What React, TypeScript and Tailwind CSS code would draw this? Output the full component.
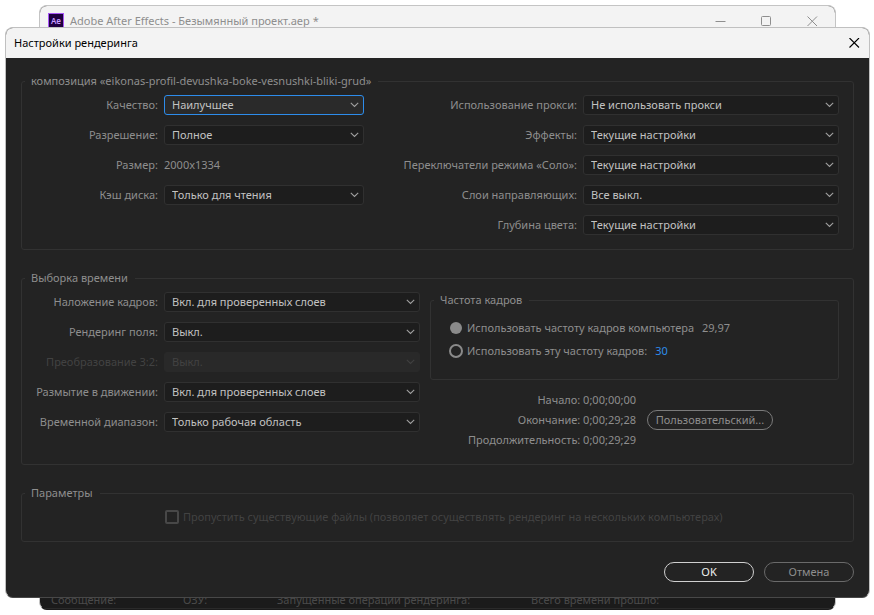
import { useId, useState } from 'react';
import type { ReactNode } from 'react';
import clsx from 'clsx';

const leftOptions = [
  { label: 'Качество:', value: 'Наилучшее', focused: true },
  { label: 'Разрешение:', value: 'Полное' },
  { label: 'Размер:', value: '2000x1334', text: true },
  { label: 'Кэш диска:', value: 'Только для чтения' },
];

const rightOptions = [
  { label: 'Использование прокси:', value: 'Не использовать прокси' },
  { label: 'Эффекты:', value: 'Текущие настройки' },
  { label: 'Переключатели режима «Соло»:', value: 'Текущие настройки' },
  { label: 'Слои направляющих:', value: 'Все выкл.' },
  { label: 'Глубина цвета:', value: 'Текущие настройки' },
];

const timeOptions = [
  { label: 'Наложение кадров:', value: 'Вкл. для проверенных слоев' },
  { label: 'Рендеринг поля:', value: 'Выкл.' },
  { label: 'Преобразование 3:2:', value: 'Выкл.', disabled: true },
  { label: 'Размытие в движении:', value: 'Вкл. для проверенных слоев' },
  { label: 'Временной диапазон:', value: 'Только рабочая область' },
];

type Option = {
  label: string;
  value: string;
  focused?: boolean;
  text?: boolean;
  disabled?: boolean;
};

function Row({ option, labelClass, selectClass }: { option: Option; labelClass: string; selectClass: string }) {
  const id = useId();
  const { label, value, focused, text, disabled } = option;

  return (
    <div className="flex h-5 items-center justify-end gap-1.5">
      <label
        htmlFor={text ? undefined : id}
        className={clsx('text-right whitespace-nowrap', labelClass, disabled && 'text-[#424242]')}
      >
        {label}
      </label>
      {text ? (
        <span className={selectClass}>{value}</span>
      ) : (
        <div className={clsx('relative', selectClass)}>
          <select
            id={id}
            disabled={disabled}
            className={clsx(
              'block h-5 w-full appearance-none rounded-[3px] border px-[7px] leading-4 outline-none',
              disabled && 'border-[#292929] bg-[#292929] text-[#424242] opacity-100',
              focused && 'border-[#2d8ceb] bg-[#2a2a2a] text-[#c2c2c2]',
              !disabled && !focused && 'border-[#303030] bg-[#1d1d1d] text-[#c2c2c2]',
            )}
          >
            <option>{value}</option>
          </select>
          <svg
            viewBox="0 0 9 6"
            className={clsx(
              'pointer-events-none absolute top-[7px] right-[5px] h-1.5 w-[9px]',
              disabled ? 'text-[#404040]' : 'text-[#a0a0a0]',
            )}
            fill="none"
            stroke="currentColor"
            strokeWidth="1.1"
          >
            <path d="M0.8 0.9 4.5 4.4 8.2 0.9" />
          </svg>
        </div>
      )}
    </div>
  );
}

function Group({ title, className, children }: { title: string; className?: string; children: ReactNode }) {
  return (
    <fieldset className={clsx('min-w-0 rounded-[3px] border border-[#323232]', className)}>
      <legend className="ml-[3px] h-4 pr-[7px] pl-1.5 leading-4">{title}</legend>
      {children}
    </fieldset>
  );
}

function MainWindow() {
  return (
    <div className="absolute top-[5px] right-[38px] bottom-[5px] left-[39px] flex flex-col justify-between overflow-hidden rounded-lg border border-[#c4c4c4] border-b-[#1b1b1b] bg-[#1b1b1b]">
      <div className="flex h-[30px] items-center bg-[#f3f3f3] pl-2 text-[#8e8e8e]">
        <svg viewBox="0 0 16 16" className="size-4">
          <rect width="16" height="16" fill="#a855f7" />
          <rect x="1" y="1" width="14" height="14" fill="#1f0040" />
          <text x="8" y="11" textAnchor="middle" fontSize="8" fontWeight="600" fill="#c79bff">
            Ae
          </text>
        </svg>
        <span className="ml-1.5 flex-1">Adobe After Effects - Безымянный проект.aep *</span>
        <button aria-label="Свернуть" className="flex w-[46px] justify-center">
          <svg viewBox="0 0 11 11" className="size-[11px]" stroke="currentColor">
            <path d="M0.5 5.5h10" />
          </svg>
        </button>
        <button aria-label="Развернуть" className="flex w-[46px] justify-center">
          <svg viewBox="0 0 11 11" className="size-[11px]" stroke="currentColor" fill="none">
            <rect x="0.5" y="0.5" width="9" height="9" rx="1" />
          </svg>
        </button>
        <button aria-label="Закрыть" className="flex w-[46px] justify-center">
          <svg viewBox="0 0 11 11" className="size-[11px]" stroke="currentColor">
            <path d="m0.5 0.5 9.5 9.5m0-9.5-9.5 9.5" />
          </svg>
        </button>
      </div>
      <div className="flex border-b border-[#2a2a2a] pl-[11px] leading-4 text-[#4a4a4a]">
        <span className="w-[132px]">Сообщение:</span>
        <span className="w-[94px]">ОЗУ:</span>
        <span className="w-[254px]">Запущенные операции рендеринга:</span>
        <span>Всего времени прошло:</span>
      </div>
    </div>
  );
}

export default function App() {
  const [rate, setRate] = useState('comp');
  const [custom, setCustom] = useState('30');

  return (
    <div className="relative bg-white pt-[27px] pr-1 pb-[17px] pl-[5px] font-['Noto_Sans',sans-serif] text-[11px] text-[#8e8e8e]">
      <MainWindow />

      <div
        role="dialog"
        aria-labelledby="dialog-title"
        className="relative overflow-hidden rounded-lg border border-[#c0c0c0] border-b-[#484848] bg-[#232323]"
      >
        <div className="flex h-[30px] items-center justify-between bg-[#f3f3f3] pr-[9px] pl-2 text-black">
          <h1 id="dialog-title">Настройки рендеринга</h1>
          <button aria-label="Закрыть">
            <svg viewBox="0 0 11 11" className="size-[11px]" stroke="currentColor" strokeWidth="1.1">
              <path d="m0.5 0 9.5 9.5m0-9.5-9.5 9.5" />
            </svg>
          </button>
        </div>

        <form className="flex flex-col gap-5 p-[15px]" onSubmit={(e) => e.preventDefault()}>
          <Group title="композиция «eikonas-profil-devushka-boke-vesnushki-bliki-grud»" className="pr-3.5 pb-3.5">
            <div className="flex justify-between pt-1.5">
              <div className="flex flex-col gap-2.5">
                {leftOptions.map((option) => (
                  <Row key={option.label} option={option} labelClass="w-[136px]" selectClass="w-[200px]" />
                ))}
              </div>
              <div className="flex flex-col gap-2.5">
                {rightOptions.map((option) => (
                  <Row key={option.label} option={option} labelClass="" selectClass="w-64" />
                ))}
              </div>
            </div>
          </Group>

          <Group title="Выборка времени" className="pr-3.5 pb-3.5">
            <div className="flex gap-2.5 pt-1.5">
              <div className="flex flex-col gap-2.5">
                {timeOptions.map((option) => (
                  <Row key={option.label} option={option} labelClass="w-[136px]" selectClass="w-64" />
                ))}
              </div>

              <div className="flex flex-1 flex-col gap-2.5">
                <Group title="Частота кадров" className="pb-5">
                  <div className="flex flex-col gap-[7px] pt-3 pl-[18px] leading-4">
                    <div className="flex items-center gap-2">
                      <label className="flex items-center gap-1">
                        <input
                          type="radio"
                          name="rate"
                          checked={rate === 'comp'}
                          onChange={() => setRate('comp')}
                          className="size-3.5 appearance-none rounded-full border-2 border-[#8a8a8a] checked:border checked:border-transparent checked:bg-[#8a8a8a] checked:bg-clip-padding"
                        />
                        Использовать частоту кадров компьютера
                      </label>
                      <span>29,97</span>
                    </div>
                    <div className="flex items-center gap-2">
                      <label className="flex items-center gap-1">
                        <input
                          type="radio"
                          name="rate"
                          checked={rate === 'custom'}
                          onChange={() => setRate('custom')}
                          className="size-3.5 appearance-none rounded-full border-2 border-[#8a8a8a] checked:border checked:border-transparent checked:bg-[#8a8a8a] checked:bg-clip-padding"
                        />
                        Использовать эту частоту кадров:
                      </label>
                      <input
                        type="text"
                        aria-label="Частота кадров"
                        value={custom}
                        onChange={(e) => setCustom(e.target.value)}
                        className="h-4 w-10 bg-transparent text-[#2d8ceb] outline-none"
                      />
                    </div>
                  </div>
                </Group>

                <div className="flex items-center gap-[11px]">
                  <div className="w-[206px] text-right leading-5">
                    <p>Начало: 0;00;00;00</p>
                    <p>Окончание: 0;00;29;28</p>
                    <p>Продолжительность: 0;00;29;29</p>
                  </div>
                  <button type="button" className="h-5 w-[126px] rounded-full border border-[#7a7a7a] leading-4">
                    Пользовательский...
                  </button>
                </div>
              </div>
            </div>
          </Group>

          <Group title="Параметры" className="pb-4">
            <label className="flex items-center gap-1 pt-2 pl-[143px] leading-4 text-[#424242]">
              <input
                type="checkbox"
                disabled
                className="size-3.5 appearance-none rounded-[2px] border-2 border-[#484848]"
              />
              Пропустить существующие файлы (позволяет осуществлять рендеринг на нескольких компьютерах)
            </label>
          </Group>

          <div className="flex justify-end gap-2.5">
            <button type="submit" className="h-5 w-[90px] rounded-full border border-[#d0d0d0] leading-4 text-[#f0f0f0]">
              OK
            </button>
            <button type="button" className="h-5 w-[90px] rounded-full border border-[#6a6a6a] leading-4">
              Отмена
            </button>
          </div>
        </form>
      </div>
    </div>
  );
}
